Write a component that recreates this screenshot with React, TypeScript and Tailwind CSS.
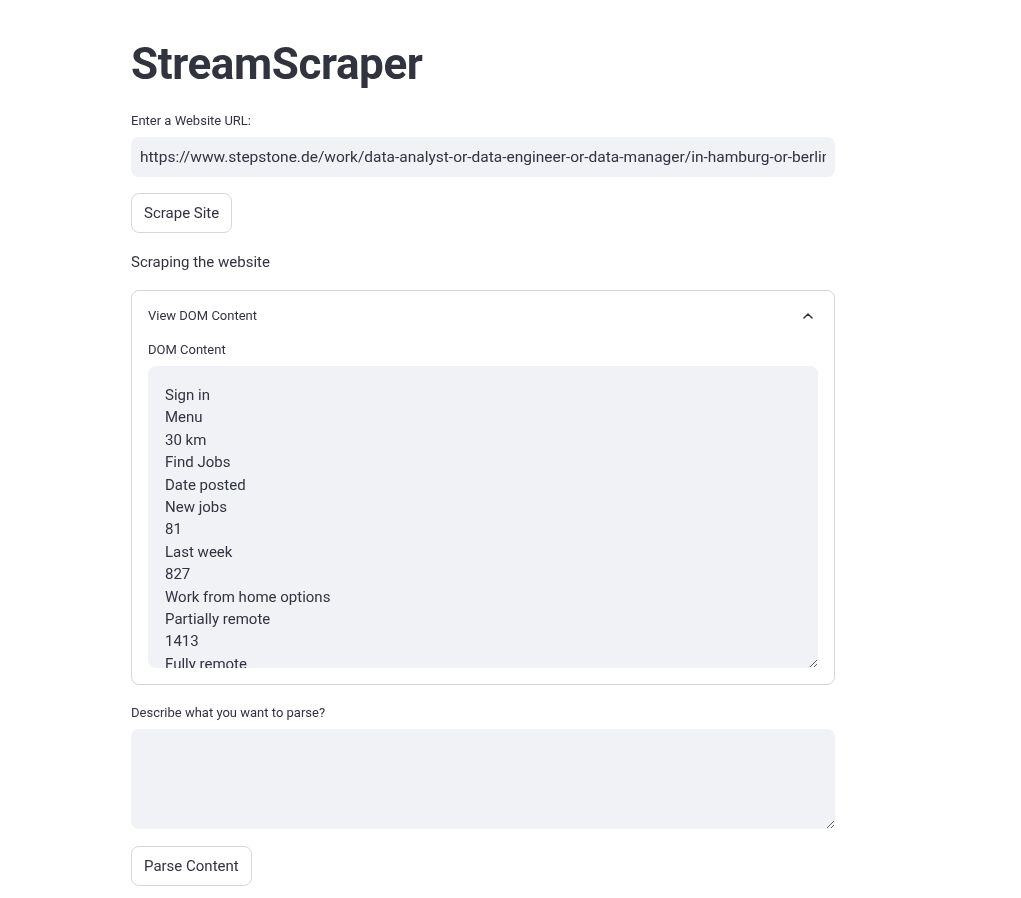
import React from 'react';
import { ChevronUp } from 'lucide-react';

const url = 'https://www.stepstone.de/work/data-analyst-or-data-engineer-or-data-manager/in-hamburg-or-berlin-or-munich?radius=30&wfh=1';

const domText = [
  'Sign in',
  'Menu',
  '30 km',
  'Find Jobs',
  'Date posted',
  'New jobs',
  '81',
  'Last week',
  '827',
  'Work from home options',
  'Partially remote',
  '1413',
  'Fully remote',
  '212',
  'Salary',
  'Experience',
].join('\n');

const font = { fontFamily: 'Roboto, "Noto Sans", sans-serif' };

function Label({ children }: { children: React.ReactNode }) {
  return <div className="text-[13px] leading-5 text-[#31333f] h-5 mb-[6px]">{children}</div>;
}

export default function App() {
  return (
    <div className="min-h-[898px] bg-white text-[#31333f]" style={font}>
      <div className="pl-[131px] w-[835px] pt-[38px]">
        <h1 className="text-[44px] font-bold leading-[53px] tracking-[-0.4px] text-[#31333f] h-[53px]">StreamScraper</h1>

        <div className="mt-[20px]">
          <Label>Enter a Website URL:</Label>
          <input
            readOnly
            value={url}
            className="w-full h-[40px] rounded-lg bg-[#f0f2f6] px-[9px] text-[15.5px] text-[#31333f] outline-none"
          />
        </div>

        <button className="mt-[16px] h-[40px] px-[12px] rounded-lg border border-[#d6d6d9] bg-white text-[15px] text-[#31333f]">
          Scrape Site
        </button>

        <p className="mt-[17px] text-[15px] leading-6 h-6">Scraping the website</p>

        <div className="mt-[16px] rounded-lg border border-[#d6d6d9] px-[16px] pb-[16px]">
          <div className="h-[49px] flex items-center justify-between">
            <span className="text-[13px]">View DOM Content</span>
            <ChevronUp size={16} strokeWidth={2.25} className="mr-[2px] text-[#31333f]" />
          </div>
          <Label>DOM Content</Label>
          <textarea
            readOnly
            value={domText}
            className="block w-full h-[302px] rounded-lg bg-[#f0f2f6] px-[17px] pt-[18px] text-[15px] leading-[22.4px] text-[#31333f] outline-none resize-y"
          />
        </div>

        <div className="mt-[18px]">
          <Label>Describe what you want to parse?</Label>
          <textarea className="block w-full h-[100px] rounded-lg bg-[#f0f2f6] px-[16px] py-[12px] text-[15px] outline-none resize-y" />
        </div>

        <button className="mt-[17px] h-[40px] px-[12px] rounded-lg border border-[#d6d6d9] bg-white text-[15px] text-[#31333f]">
          Parse Content
        </button>
      </div>
    </div>
  );
}
